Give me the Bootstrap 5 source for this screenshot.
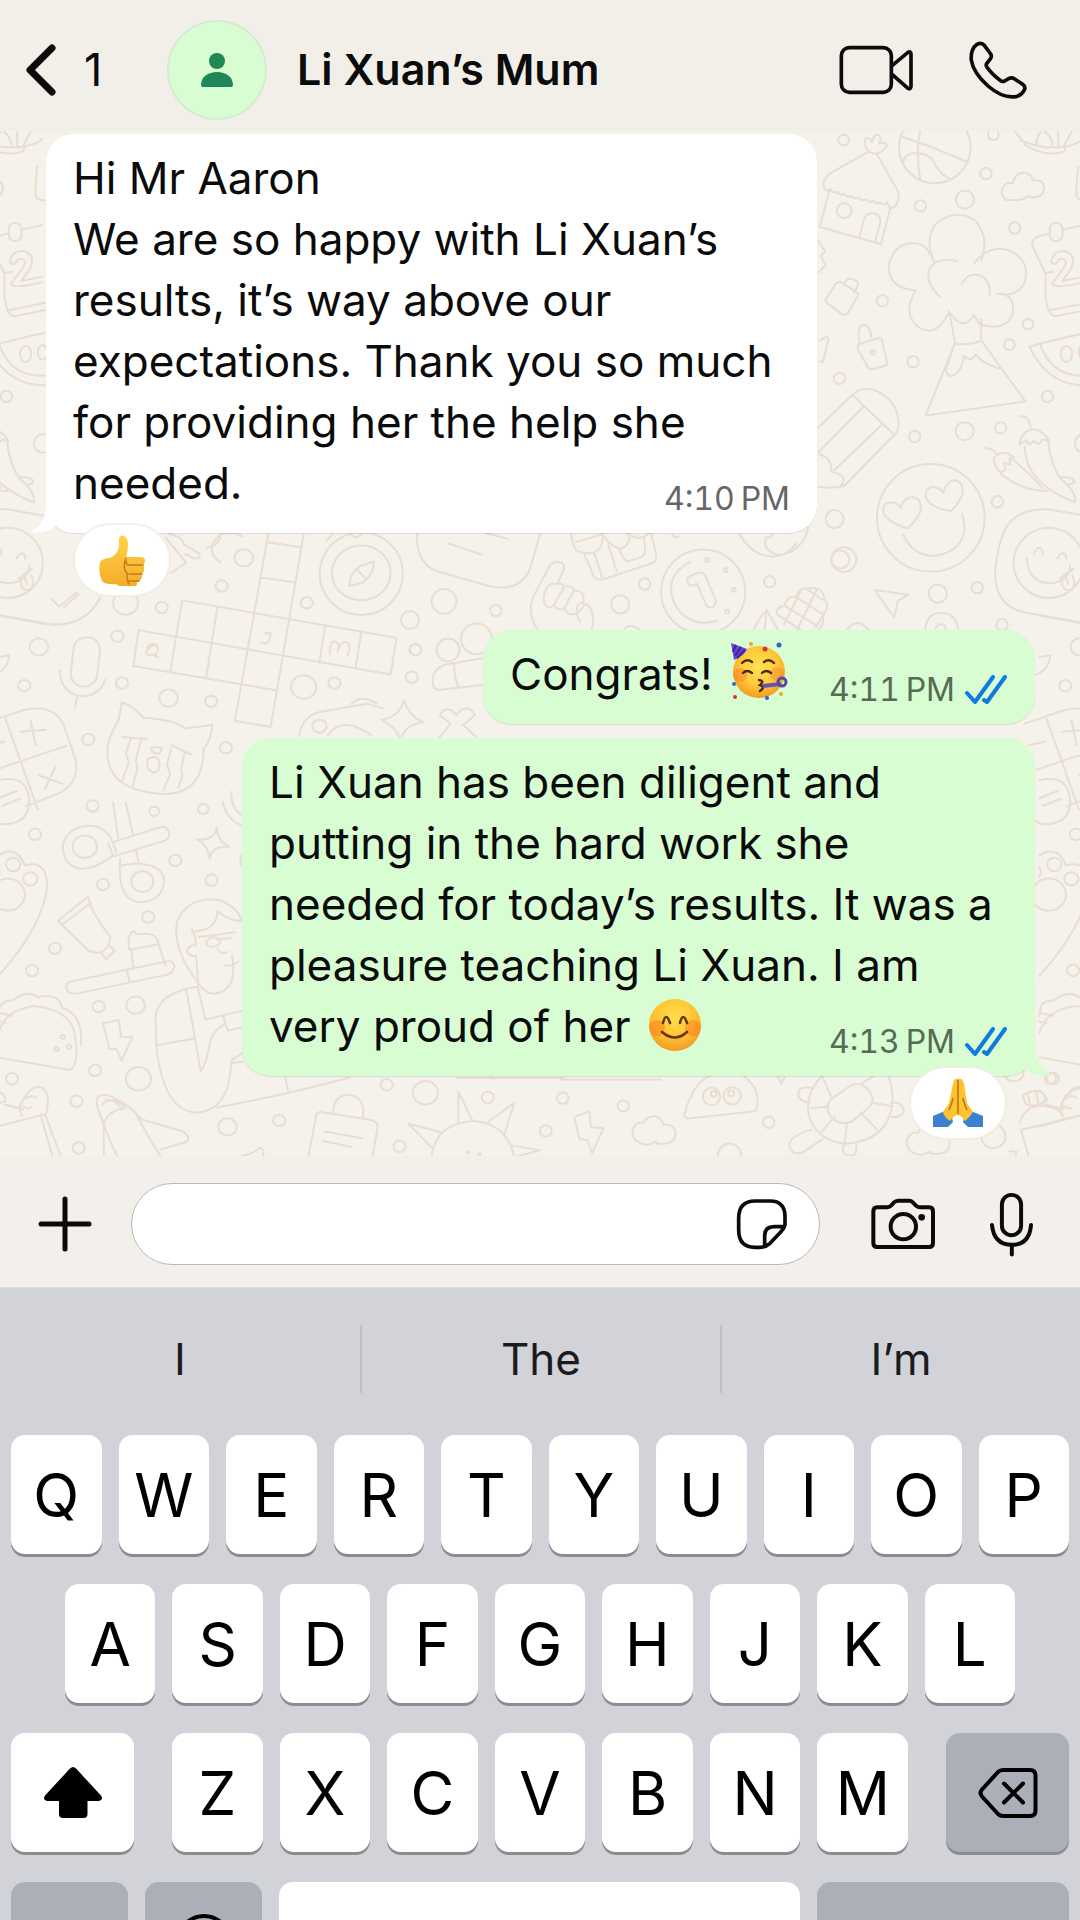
<!DOCTYPE html>
<html lang="en">
<head>
<meta charset="utf-8">
<meta name="viewport" content="width=device-width, initial-scale=1">
<title>Li Xuan’s Mum</title>
<link href="https://cdn.jsdelivr.net/npm/bootstrap@5.3.0/dist/css/bootstrap.min.css" rel="stylesheet">
<style>
  body { font-family: Inter, "Liberation Sans", sans-serif; color: #0b0b0b; background: #d1d3d9; }
  button, input { font-family: inherit; color: inherit; }
  svg { display: block; flex-shrink: 0; }
  .line-icon { fill: none; stroke: currentColor; stroke-linecap: round; stroke-linejoin: round; }
  .plain-btn { border: 0; padding: 0; background: none; }

  .topbar { background: #f2efe9; height: 131px; padding: 9px 52px 0 25px; }
  .back-link { width: 142px; gap: 27px; font-size: 45px; color: inherit; }
  .avatar { width: 100px; height: 100px; background: #d8fdd2; border: 2px solid #d3ecce; }
  .contact-name { font-size: 43px; font-weight: 600; margin-left: 30px; }
  .call-actions { gap: 53px; }

  .chat { background: #f5f2eb; padding: 3px 45px 80px 46px; }
  .wallpaper { position: absolute; inset: 0; width: 100%; height: 100%; }
  .wallpaper g { fill: none; stroke: #e9ddd2; stroke-width: 2px; stroke-linejoin: round; stroke-linecap: round; }
  .wallpaper g * { vector-effect: non-scaling-stroke; }
  .bubble { max-width: 100%; padding: 14px 27px 17px; border-radius: 28px; font-size: 44px; line-height: 61px; box-shadow: 0 1px 1px rgba(0,0,0,.1); }
  .bubble p { margin: 0; white-space: nowrap; }
  .bubble-in { width: 771px; background: #fff; margin-bottom: 97px; }
  .bubble-out { background: #d8fdd2; }
  .bubble-short { width: 552px; margin-bottom: 14px; }
  .bubble-long { width: 793px; }
  .stamp { font-size: 32px; line-height: 34px; margin-top: 29px; color: #666; gap: 10px; font-variant-numeric: tabular-nums; }
  .bubble-out .stamp { color: #566b54; }
  .ticks { color: #0f7be0; }
  .tail-in { position: absolute; left: -16px; bottom: -1px; }
  .tail-out { position: absolute; right: -16px; bottom: 0; }
  .face { display: inline-block; vertical-align: -10px; margin: -4px 0 0 5px; }
  .reaction { position: absolute; width: 94px; height: 70px; background: #fff; border-radius: 35px; box-shadow: 0 0 0 2px rgba(240,236,228,.8); }
  .reaction-start { left: 29px; bottom: -62px; }
  .reaction-end { right: 30px; bottom: -62px; }

  .composer { background: #f3f0eb; padding: 27px 46px 22px 38px; border-bottom: 1px solid #dcdbda; }
  .message-pill { height: 82px; min-width: 0; margin: 0 51px 0 39px; padding: 0 31px 0 32px; background: #fff; border: 1px solid #b9b9bb; border-radius: 41px; }
  .message-pill input { border: 0; outline: 0; background: none; font-size: 44px; min-width: 0; }
  .composer-end { gap: 54px; }

  .keyboard { background: #d1d3d9; min-height: 0; }
  .suggestions { padding: 37px 0 42px; }
  .suggestions button { height: 68px; font-size: 44px; color: #1b1b1e; }
  .suggestions button + button { border-left: 2px solid #bcbec4; }
  .key-rows { gap: 30px; padding: 0 11px; }
  .key-row { gap: 17px; }
  .key-row-home { padding: 0 54px; }
  .key { flex: 1 1 0; height: 119px; padding: 0; border: 0; border-radius: 14px; background: #fff; color: #000; font-size: 60px; line-height: 1; box-shadow: 0 3px 0 #8a8c91; }
  .key-wide { flex: 0 0 123px; }
  .key-grey { background: #abafb8; }
  .letter-block { gap: 17px; margin: 0 21px; }
  .key-small { flex: 0 0 117px; }
  .key-space { flex: 520 1 0; }
  .key-return { flex: 252 1 0; }
</style>
</head>
<body>
<div class="vh-100 overflow-hidden d-flex flex-column">

  <header class="topbar d-flex align-items-center flex-shrink-0">
    <a class="back-link d-flex align-items-center text-decoration-none" href="#" aria-label="Back, 1 unread">
      <svg class="line-icon" width="32" height="54" viewBox="0 0 32 54" stroke-width="7"><path d="M27 5 5 27l22 22"/></svg>
      <span>1</span>
    </a>
    <div class="avatar rounded-circle d-flex align-items-center justify-content-center">
      <svg width="32" height="36" viewBox="0 0 32 36" fill="#1e8755"><circle cx="16" cy="9" r="8"/><path d="M0 33c0-8 7-13 16-13s16 5 16 13q0 2-2 2H2q-2 0-2-2z"/></svg>
    </div>
    <h1 class="contact-name mb-0 text-nowrap">Li Xuan’s Mum</h1>
    <div class="call-actions d-flex align-items-center ms-auto">
      <button class="plain-btn" aria-label="Video call"><svg class="line-icon" width="76" height="52" viewBox="118 74 228 156" stroke-width="11"><rect x="125" y="85" width="150" height="134" rx="24"/><path d="m278 138 47-39q9-5 9 6v96q0 10-9 6l-47-41"/></svg></button>
      <button class="plain-btn" aria-label="Voice call"><svg class="line-icon" width="60" height="60" viewBox="500 62 180 180" stroke-width="11"><path d="M549 78q-9-10-22-3-20 15-17 48 6 38 50 77 44 38 84 32 18-4 26-22 3-9-6-15l-24-16q-9-6-18-1l-12 7q-6 3-12-1-28-21-42-42-3-5 0-9l12-16q4-6 0-13z"/></svg></button>
    </div>
  </header>

  <main class="chat position-relative overflow-hidden flex-shrink-0">
    <svg class="wallpaper" viewBox="0 131 1080 1022" preserveAspectRatio="xMidYMin slice" aria-hidden="true">
      <defs>
        <g id="doodles-east" transform="translate(780 120) scale(.33333)">
          <path d="M128 195q0-20 20-35l115-65 25 8 60 105q10 20 0 40-4 15-18 15-14-10-10-18-10 14-22 2-10 8-22-6-10 10-22-4-12 8-22-6-10 8-22-4-12 8-20-6-14 8-20-6-14 6-22-8-10 8-18-2zM145 212l-28 108 183 52 28-110M235 352l14-54q10-24 34-18 20 8 14 30l-16 58M262 95q-16-28-8-40 14-4 18 12 8-28 20-22 14 6 2 26 18-8 24 4-6 18-32 26"/><circle cx="190" cy="271" r="22"/>
          <circle cx="188" cy="60" r="16"/><circle cx="461" cy="82" r="107"/><path d="M362 50q90 28 194 75M436-20q-40 80-18 200M365 125q10-24 36-26 50 0 60 34 20 34 48 44M405 30h90"/>
          <circle cx="614" cy="160" r="17"/><circle cx="551" cy="238" r="27"/><circle cx="418" cy="257" r="17"/><circle cx="700" cy="323" r="17"/><circle cx="636" cy="44" r="16"/>
          <path d="M668 233q-16-22 6-42 14-6 20 0 8-34 34-34 24 4 26 24 32-6 34 24-4 28-32 26-12 2-16-4-8 14-46 12-20 4-26-6z"/>
          <path d="M700 36q30 30 30 38 60 40 118 20l6-14M765 76q2-36 14-40M790 36q20 10 24 44M830 36v40M870 36l-24 44q40-6 60-24M716 60q70 30 130 20"/>
          <path d="M458 422q-30-70 10-115 58-44 114-6 44 50 18 118M578 428q50-60 110-36 60 30 42 94-20 44-82 34 54-2 46 60-20 54-98 32l-18-28q-28 42-58 10l-16-20q-38 78-88 48-56-38-12-112-86-8-80-78 20-78 96-60 24 14 24 30M475 528q-50-50-26-90 26-28 76-16M542 490q18-36 58-24 32 18 24 60M504 572l18 98q44 4 78-10v-64M520 670l-86 214 298-42-132-182M520 670l-26 80q10 26 30 10 20-16 24-54 20 20 36-4 20 28 74 42"/>
          <path d="m135 535 30-44q8-10 16-6l46 30q8 6 2 16l-28 46q-8 10-18 4l-44-34q-6-4-4-12zM192 490q4-20 22-14 26 6 12 30l-8 12M232 672l60-20q8-2 10 4l16 68q2 8-6 12l-40 10q-8 0-12-8l-28-50q-4-12 0-16zM236 668q-10-44 8-54 22-4 28 36"/><circle cx="275" cy="695" r="6"/><circle cx="304" cy="541" r="17"/><circle cx="396" cy="723" r="17"/><circle cx="740" cy="611" r="16"/><circle cx="684" cy="672" r="16"/><circle cx="176" cy="773" r="17"/><circle cx="798" cy="827" r="17"/>
          <path d="M752 375q0-20 18-26l35-10M845 328l60-14M752 375l40 84v70q8 56 30 58l100-20M800 570l120-24M795 458l20-4M808 424q8-34 40-32 40 10 20 54l-26 36 60-12M808 424q6 10 18 4 4-16 20-12 12 6 4 22l-38 52q8 16 90-4"/><rect x="805" y="308" width="38" height="54" rx="17"/><path d="M890 140q-8 70-4 92 20 20 90-4"/>
          <path d="M744 678q70-20 190-46M744 678q60 130 196 114M776 672q40 110 160 90"/><ellipse cx="855" cy="700" rx="17" ry="24"/><ellipse cx="906" cy="695" rx="14" ry="22"/>
          <path d="m110 922 105-100q20-22 62-16 76 32 76 106-4 30-24 40L190 1095q-30 8-80 2M217 825l120 114M247 858 115 992M300 914 160 1048M115 1000q40 10 36 52 34 4 38 26l-8 16M112 362q10 10 12 20l10 10-14 16 14 26-20 22M115 660l24-12 4 6-16 70-12-2"/>
          <circle cx="401" cy="947" r="17"/><circle cx="550" cy="931" r="27"/><circle cx="658" cy="921" r="17"/><circle cx="648" cy="1142" r="17"/><circle cx="908" cy="968" r="28"/>
          <path d="M714 887q26-4 32 24l4 16M714 972q6-40 36-46 30-4 54 34l-20-4-12 14-16-10-12 12-10-14zM730 976q0 110 150 168 6-30-44-72-32-50-36-116M608 982q30-2 40 20M638 1010q16-18 40-14l20 14-14 2 4 18-20-4 4 18-12 12q-26-22-22-46zM660 1060q60 50 140 50M692 1014q50 40 90 86M840 1068q40 0 38 18l-20 6"/>
          <circle cx="449" cy="1190" r="161"/><path d="M380 1222q-66-20-73-50-4-28 24-28 20 0 28 16 8-32 36-32 26 4 24 38-4 22-39 56zM510 1170q-66-10-76-42-4-26 20-30 20 0 32 18 8-36 34-38 28 4 24 40-4 18-34 52zM366 1240q30 64 90 64 90-10 94-86-2-26-8-40"/>
          <circle cx="161" cy="1194" r="27"/><circle cx="189" cy="1315" r="37"/><circle cx="588" cy="1399" r="17"/><circle cx="470" cy="1417" r="27"/><path d="m281 1406 102 14-32 18-12 50z"/>
          <path d="M945 1190l-140-25q-90-6-128 50-26 40-36 140 0 100 90 118l214 38"/><circle cx="802" cy="1325" r="105"/><path d="M757 1300q8-22 18-20 10 4 8 20M828 1312q8-18 18-16 10 4 8 18M736 1312q4 72 72 74 56-6 58-54M835 1372l40-30M840 1376q0 30 22 32 26-10 10-46M852 1366l8 22"/><circle cx="662" cy="1510" r="17"/>
          <path d="M432 1528q2-52 48-54 46 2 52 54M462 1526q4-18 18-18 12 2 14 18M196 1528q34-46 68 0"/>
        </g>
        <g id="doodles-middle" transform="translate(400 520) scale(.33333)">
          <path d="M52 36q-4 90 60 114l155 44q98 22 126-60l28-98M145 66l100 34M258 36l66 17"/>
          <circle cx="133" cy="240" r="37"/><circle cx="31" cy="296" r="27"/><circle cx="288" cy="267" r="17"/><circle cx="660" cy="249" r="27"/><circle cx="733" cy="188" r="17"/><circle cx="1107" cy="181" r="17"/><circle cx="1318" cy="115" r="27"/><circle cx="230" cy="352" r="46"/><circle cx="145" cy="385" r="34"/><circle cx="48" cy="384" r="17"/>
          <path d="M450 132q14-16 36-6 10 8 2 26l-16 36q-26-6-34 16-14 32 0 50 14 10 24-4 8 20 30 10 10 22 30 18 22-6 30-30 20 0 26 38 4 26-12 60M450 132l-48 90q-24 50 12 104M472 188q18-4 20 10-16 24-30 52M500 194q20 0 22 14-20 28-30 58M524 208q30-2 26 36-20 0-20 20-2 20 10 36"/>
          <path d="M512 26q4 50 20 64 44 16 66-8 10-10 12-60M528 62l76-22M604 36q40 60 70 40 14-10 14-40M672 30q50 40 78 0M552 98l28 66q10 14 30 10l150-50q8-8 8-24l-16-64M582 94l24 74M625 74l25 76M655 82l16 30q6 10 20 6l38-14q10-10 2-50"/>
          <circle cx="908" cy="211" r="126"/><path d="M870 122q-80 40-50 120 40 80 130 56M862 182q-6-16 10-18 30-20 42-2l32 76q0 18-16 20-12 0-16-14l-24-56q-26 12-28-6z"/><circle cx="921" cy="116" r="6"/><circle cx="975" cy="146" r="6"/><circle cx="999" cy="205" r="6"/><circle cx="980" cy="270" r="6"/>
          <path d="M1015 36q40 70 102 70 90-10 105-86M1090 26q24-10 26 12-4 14-20 10-14 40 40 54 26-4 50-34"/>
          <path d="M1058 326q20-40 40-60l34 60M1092 326l6-60M1128 276q0-20 24-22 4-30 34-28 10-30 36-24 44-10 48 30 20 26-4 46 6 30-12 44M1130 278l70 48M1154 254l90 56M1188 228l82 54M1220 204l46 32M1188 328l60-124M1150 308l50-100M1244 318l26-40"/>
          <path d="M816 40q4 10 20 6M670 326q20-24 48 0"/>
        </g>
        <g id="doodles-west" transform="translate(0 500) scale(.35714 .33333)">
          <path d="M466 108l58 76-44 32M476 98q40 10 40 30l46 30q4 14-16 14l-24-14M580 140q40-10 40-40M620 184q-50-40 0-84 40-12 60 6"/>
          <circle cx="685" cy="170" r="26"/><circle cx="623" cy="254" r="17"/><circle cx="861" cy="304" r="17"/><circle cx="355" cy="305" r="35"/><circle cx="456" cy="318" r="17"/><circle cx="332" cy="404" r="17"/><circle cx="113" cy="436" r="26"/><circle cx="72" cy="552" r="17"/><circle cx="345" cy="544" r="17"/><circle cx="475" cy="589" r="26"/><circle cx="594" cy="599" r="17"/><circle cx="852" cy="556" r="35"/><circle cx="938" cy="544" r="17"/><circle cx="1164" cy="445" r="17"/><circle cx="1154" cy="527" r="17"/><circle cx="251" cy="713" r="17"/><circle cx="635" cy="738" r="17"/><circle cx="896" cy="673" r="20"/>
          <path d="M755 90 660 657l100 19L852 100M752 123l94 15M736 229l90 14M513 297l598 112-16 110-704-133-14 107 400 73M513 297l-33 212M611 320l-31 207M912 373l-16 110M1013 392l-16 108"/>
          <path d="M415 438q16-18 28-6 8 28-16 30-20 0-12-16 10-16 28-14M436 462l10 6M744 396l16-2-4 24q-8 12-22 6M925 458q0-40 16-38 14 4 6 30 10-34 24-28 16 4 4 40" />
          <circle cx="1013" cy="215" r="82"/><ellipse cx="1013" cy="217" rx="116" ry="124"/><path d="M980 255q0-40 28-60l40-14q0 40-30 62zM1000 204l26 28M916 118l16-20M980 96q20 24 36 0"/>
          <rect x="206" y="407" width="74" height="148" rx="37" transform="rotate(6 243 480)"/><path d="M172 506q0 68 60 78 50 0 66-50M220 585l-6 34M148 292l22 24 50-44M182 318l42-40M0 342l120 24q120 20 165-80"/>
          <path d="M-40 665l110-40q90-20 114 50l32 100q10 72-50 100l-90 38M20 652l90 270M-10 804l200-72M62 690l70-6M90 658l14 74M112 820l68 26M160 792l-30 70M-30 730l46-10"/><path d="M0 835q80-20 86 60 0 70-70 72-20 0-36-20M0 888l50-20M10 912l50-22M0 466l30-4q-4 50-50 60"/>
          <path d="M345 602q30 10 60 46 90 6 114 32l78-10q-4 50-24 70 0 140-116 136-144-10-152-110-6-50 30-110zM345 706l70 6M370 712l-14 40 8 30-20 60M398 714l-14 60 4 30-14 50M482 730l56 28M482 740l-12 50 10 26-20 50M520 752l-10 50 4 20-12 36M425 740q14-8 32 0-4 16-16 16-12-4-16-16zM432 765q20 0 18 30-6 20-20 16-22-12-12-40zM840 702q8-60 60-72l130-24 44 14M986 606q30-30 70 0M1070 655q50-10 62-60 14 50 54 66-50 10-60 44M1070 655q40 20 48 50M920 700q40-60 120 0M1232 640q20-34 46 0 34-40 52 0l-32 30 34 34M1232 640l30 26-30 40"/>
          <path d="M1212 540q0-50 60-56l80-14M1212 540q0 26 20 24l120-14M1272 484q0 50 14 74"/>
        </g>
        <g id="doodles-south" transform="translate(0 800) scale(.35714 .33333)">
          <path d="M320 0l14 108M355 0l20 96M320 120l135-46q22 0 22 24 0 14-20 20L324 162M306 122l14 38M340 170q-10 130 60 130 64-8 62-70-6-44-80-46l-38 6M384 146l8 38M318 162q-50 40-90 38-50-10-48-74 20-60 86-54 50 10 62 80"/><circle cx="241" cy="134" r="34"/><circle cx="402" cy="238" r="31"/>
          <circle cx="102" cy="97" r="17"/><circle cx="263" cy="12" r="17"/><circle cx="435" cy="28" r="14"/><circle cx="572" cy="21" r="15"/><circle cx="494" cy="175" r="17"/><circle cx="292" cy="247" r="17"/><circle cx="595" cy="234" r="17"/><circle cx="418" cy="344" r="17"/><circle cx="158" cy="438" r="17"/><circle cx="94" cy="504" r="17"/><circle cx="280" cy="612" r="17"/><circle cx="383" cy="608" r="26"/><circle cx="270" cy="803" r="17"/><circle cx="391" cy="828" r="35"/><circle cx="38" cy="828" r="17"/><circle cx="218" cy="895" r="17"/><circle cx="640" cy="972" r="26"/><circle cx="784" cy="953" r="17"/><circle cx="224" cy="1035" r="17"/><circle cx="1084" cy="846" r="17"/><circle cx="1192" cy="870" r="35"/><circle cx="1366" cy="884" r="17"/><circle cx="1120" cy="1030" r="17"/><circle cx="1528" cy="984" r="17"/>
          <path d="M610 76q0 40 34 58-50-4-54 36-6-44-36-58 50 4 56-36zM626 0q10 50 52 70M650-30q0 50 30 70M676 160v30"/>
          <circle cx="26" cy="277" r="48"/><circle cx="41" cy="187" r="20"/><circle cx="89" cy="230" r="20"/><path d="M0 160q50-34 74 30 60-20 62 60-10 120-136 270M0 195q6 16 0 28"/>
          <path d="M250 283q10 50 62 120 0 34-26 46-20 6-36-6L166 356zM258 302l-82 66M286 449l14 22 24-26-16-18M370 392q10-10 16 4 60-10 60 30l-80 16q-8-30 4-50zM372 442l4 54M448 428l18 60M205 536l270-60q18 0 16 20-6 20-26 22l-250 56q-26 0-26-22 0-12 16-16zM358 502l8 34"/>
          <path d="M556 540q-70-100-58-180 30-80 120-66 50 20 60 60M540 378q10 20 12 50-20 0-26 16 6 20 26 16l6 84q30 40 60 26 50-20 34-110M540 390l20-4q50-10 52-60 30 30 70 30M560 404l100-14M580 420q10-20 30-14 20 14-4 26-24 4-26-12zM610 412l40-6M612 440q10 20 26 8M630 488q20 6 40-10"/>
          <path d="M555 553q-120 20-116 100l2 80q20 200 120 196 60-10 80-80l12-80M525 565l40 240q16-20 24-80 8-40 40-60M556 553l22 98 100-26M440 728l104-20M628 642l12 42 40-10M655 770l28-20M610 914q200-40 370-90M800 815l8 48M655 780l28-4"/>
          <path d="M0 640q0-50 40-46 40-34 70-10 60-14 68 32M0 690q20-70 100-80 90 10 110 70 20 100-10 122l-200-38M178 616q60 20 52 110M0 630l38 10M0 658l20 4M292 662l44-10 6 50 32 2-30 70-14-34-20-2z"/><circle cx="180" cy="702" r="6"/><circle cx="197" cy="732" r="6"/><circle cx="162" cy="740" r="6"/>
          <path d="M66 940q-14-26 4-50 20-44 50-36 20 10 18 50l-4 26M78 885q20-10 26 0M70 910q10 10 20 4M0 970l130-36 44 126M120 944l32 120M0 865q20 10 20 30l-20 8M18 905l50 14M294 1060V960q-30-60-14-80 20-10 50 10 40 20 70 60l112 34q30 20 10 34l-70 22M275 910q40 120 58 150M385 935q40 80 68 125M290 905q30-30 64 10-50 10-58 46M300 890q30 0 44 30"/>
          <path d="M865 1060l22-120q0-14 16-12l130 22q26 4 26 20l-14 90M935 930q0-50 40-54 40 4 44 44l-2 26M912 986l104 20M906 1014l80 18M680 1058q30-4 50-24 16 6 8 24"/>
          <path d="M1210 1060q10-100 120-106 90 10 110 106M1284 958v-92l38 84M1368 956l72-56-26 90M1210 1034l-66-72 90 26M1436 1028l74 14-66 20M1280 826h300M1372 820l8 8"/><circle cx="1310" cy="1048" r="3"/><circle cx="1344" cy="1054" r="3"/>
        </g>
        <g id="doodles-southeast" transform="translate(560 960) scale(.33333)">
          <path d="M0 350h302M372 455q30-110 90-120h80q60 40 46 100l-4 10-200 22q-12 0-12-12z"/><circle cx="453" cy="401" r="26"/><circle cx="515" cy="399" r="26"/><circle cx="460" cy="393" r="9"/><circle cx="512" cy="391" r="9"/><circle cx="189" cy="429" r="17"/><circle cx="624" cy="478" r="17"/><circle cx="8" cy="406" r="17"/>
          <path d="M42 462l46-16 4 46 38 4-34 74-14-38-24-4zM226 532q-20-24 2-48 10-8 22-4 8-22 36-20 22 10 22 26 36-4 38 26-4 32-38 30-16 4-22-6-30 20-60-4zM470 580q10-40 40-38 30 4 32 38M1046 562q-20-24 2-48 10-8 22-4 8-22 36-20 22 10 22 26 36-4 38 26-4 32-38 30-16 4-22-6-30 20-60-4z"/>
          <path d="M785 338q-60 60-38 130 30 70 110 74 130-10 138-130 0-40-14-74M812 408l52-36q14-10 30-8 34 10 42 44-4 20-14 28l-50 40q-20 8-40 2-30-16-32-40 0-20 12-30zM810 400l-24-56M804 430l-54 6M822 462l-40 44M858 480l-6 60M900 450l48 50M934 420l60 10M900 364l40-26M756 376q-50-10-42 26 14 20 36 16M752 500q-70 20-66 50 10 30 40 18l60-40M850 545q-14 30 20 34 20-2 16-40M990 420q30-6 38 20-4 30-40 20M650 340l12 24 12-26"/>
          <circle cx="1467" cy="347" r="17"/><circle cx="1357" cy="326" r="30"/><circle cx="1296" cy="520" r="36"/><path d="M1384 400q20-20 54-14 16 10 12 30-20 16-56 10zM1400 394l6 32M1424 388l6 34M1376 478q14-50 70-50 50 10 56 26M1402 580l-24-80M1384 500l176-44M1500 454q-10-60 60-80M1510 400q10-10 20 0M1506 430l20 8M1345 565l22 2-6 14"/>
        </g>
      </defs>
      <use href="#doodles-east"/><use href="#doodles-east" x="-1038"/>
      <use href="#doodles-middle"/>
      <use href="#doodles-west"/><use href="#doodles-west" x="1038"/>
      <use href="#doodles-south"/><use href="#doodles-south" x="1038"/>
      <use href="#doodles-southeast"/>
    </svg>

    <div class="position-relative d-flex flex-column align-items-end">
      <article class="bubble bubble-in position-relative align-self-start">
        <svg class="tail-in" width="44" height="26" viewBox="0 0 44 26" fill="#fff"><path d="M16 0c-1 10-5 18-16 24 8 2 18 0 26-6 6 5 12 7 18 7V0z"/></svg>
        <p class="position-relative">Hi Mr Aaron<br>We are so happy with Li Xuan’s<br>results, it’s way above our<br>expectations. Thank you so much<br>for providing her the help she<br>needed.<time class="stamp float-end">4:10&#8201;PM</time></p>
        <span class="reaction reaction-start d-flex align-items-center justify-content-center" role="img" aria-label="Thumbs up">
          <svg width="48" height="52" viewBox="0 0 48 52"><defs><linearGradient id="thumbFill" x1="0" y1="0" x2="0" y2="1"><stop offset="0" stop-color="#ffd34b"/><stop offset="1" stop-color="#f4ad28"/></linearGradient></defs><path d="M2 28q3-4 10-4 8-4 9-12V5q1-5 5-3 4 2 4 9 0 6-2 12h15q4 0 4 4 0 3-2 4 2 2 1 5 0 3-3 4 2 2 0 5-1 3-4 3 1 5-5 5H27q-5 0-9-3-10 1-14-3-4-8-2-19z" fill="url(#thumbFill)"/><path d="M45 31H31q-3 0-3-4M44 40H31M41 47H30M28 24q-4 10 1 15 0 8 2 11" fill="none" stroke="#c87918" stroke-width="1.5" stroke-linecap="round"/></svg>
        </span>
      </article>

      <article class="bubble bubble-out bubble-short">
        <p>Congrats! <svg class="face" role="img" aria-label="Partying face" width="58" height="58" viewBox="0 0 58 58"><defs><radialGradient id="partyFill" cx=".5" cy=".4" r=".6"><stop offset="0" stop-color="#ffe251"/><stop offset=".6" stop-color="#ffc93a"/><stop offset="1" stop-color="#f39a22"/></radialGradient></defs><circle cx="29" cy="30" r="26" fill="url(#partyFill)"/><circle cx="10" cy="33" r="7" fill="#f77b2c" opacity=".45"/><circle cx="47" cy="32" r="7" fill="#f77b2c" opacity=".4"/><path d="M1 1l16 6q-3 7-13 11z" fill="#6d42d8"/><path d="M6 3l-3 7M11 5l-6 9M15 8l-8 8" stroke="#3a2795" stroke-width="2"/><g fill="none" stroke="#4b2c12" stroke-width="2.4" stroke-linecap="round"><path d="M12 21q5-5 10-1M34 20q5-4 10 1M13 31q4-4 9 0M32 31q4-4 9 0M29 38q6 1 1 5 6 2 0 6"/></g><path d="M33 44l18-2" stroke="#6552b5" stroke-width="4"/><circle cx="52" cy="40" r="4" fill="none" stroke="#514aa6" stroke-width="3"/><g fill="#2e66c4"><circle cx="49" cy="3" r="2.5"/><circle cx="4" cy="42" r="2"/><circle cx="37" cy="56" r="2"/></g><g fill="#d9363b"><circle cx="35" cy="7" r="2.5"/><circle cx="5" cy="55" r="2"/></g><g fill="#f2a52b"><circle cx="21" cy="2" r="2"/><circle cx="51" cy="52" r="2"/></g></svg><time class="stamp float-end d-flex align-items-center">4:11&#8201;PM<svg class="line-icon ticks" role="img" aria-label="Read" width="43" height="30" viewBox="0 0 43 30" stroke-width="4"><path d="m2 18 8 9L28 2M19 25l3 2L40 2"/></svg></time></p>
      </article>

      <article class="bubble bubble-out bubble-long position-relative">
        <svg class="tail-out" width="44" height="44" viewBox="0 0 44 44" fill="#d8fdd2"><path d="M0 0h28c-1 22 2 34 16 43-10 2-20-1-28-7-6 5-12 7-16 7z"/></svg>
        <p class="position-relative">Li Xuan has been diligent and<br>putting in the hard work she<br>needed for today’s results. It was a<br>pleasure teaching Li Xuan. I am<br>very proud of her <svg class="face" role="img" aria-label="Smiling face" width="54" height="54" viewBox="0 0 54 54"><defs><radialGradient id="smileFill" cx=".5" cy=".35" r=".65"><stop offset="0" stop-color="#ffe04a"/><stop offset=".6" stop-color="#ffc334"/><stop offset="1" stop-color="#f39a22"/></radialGradient></defs><circle cx="27" cy="27" r="26" fill="url(#smileFill)"/><circle cx="9" cy="30" r="8" fill="#fb7a1e" opacity=".5"/><circle cx="45" cy="30" r="8" fill="#fb7a1e" opacity=".5"/><path d="M15 25q3-12 7 0M32 25q3-12 7 0M14 34q13 11 25 0" fill="none" stroke="#66380f" stroke-width="2.6" stroke-linecap="round"/></svg><time class="stamp float-end d-flex align-items-center">4:13&#8201;PM<svg class="line-icon ticks" role="img" aria-label="Read" width="43" height="30" viewBox="0 0 43 30" stroke-width="4"><path d="m2 18 8 9L28 2M19 25l3 2L40 2"/></svg></time></p>
        <span class="reaction reaction-end d-flex align-items-center justify-content-center" role="img" aria-label="Folded hands">
          <svg width="50" height="50" viewBox="0 0 50 50"><path d="M0 38l12-5q8 6 8 11l-5 5H0zM50 38l-12-5q-8 6-8 11l5 5h15z" fill="#3d80cf"/><path d="M25 1q5-1 6 5l3 19 6 9q-3 5-8 9-4-6-7-6-4 0-8 6-6-4-7-9l6-9 4-19q1-6 5-5z" fill="#ffc32f"/><path d="M25 2v34M20 20q-2 8-4 12M30 20q2 8 4 12" stroke="#b77416" stroke-width="1.5" fill="none"/></svg>
        </span>
      </article>
    </div>
  </main>

  <form class="composer d-flex align-items-center flex-shrink-0">
    <button type="button" class="plain-btn" aria-label="Attach"><svg class="line-icon" width="54" height="56" viewBox="0 0 54 56" stroke-width="5"><path d="M27 3v50M3 28h48"/></svg></button>
    <div class="message-pill d-flex align-items-center flex-grow-1">
      <input class="w-100" type="text" aria-label="Message">
      <button type="button" class="plain-btn" aria-label="Stickers"><svg class="line-icon" width="52" height="52" viewBox="108 74 156 156" stroke-width="11"><path d="M165 83h45q45 0 45 47v24q-2 12-12 21l-33 35q-13 12-30 12h-15q-49 0-49-52v-35q0-52 49-52zM194 216v-30q1-26 28-26h30"/></svg></button>
    </div>
    <div class="composer-end d-flex align-items-center flex-shrink-0">
      <button type="button" class="plain-btn" aria-label="Camera"><svg class="line-icon" width="64" height="54" viewBox="513 68 192 160" stroke-width="12"><path d="M520 205v-95q0-12 12-12h28q10 0 16-8l5-6q6-6 14-6h32q8 0 12 6l6 6q6 8 16 8h26q12 0 12 12v95q0 12-12 12H532q-12 0-12-12z"/><circle cx="610" cy="156" r="38"/><circle cx="665" cy="128" r="10" fill="currentColor" stroke="none"/></svg></button>
      <button type="button" class="plain-btn" aria-label="Record voice message"><svg class="line-icon" width="45" height="66" viewBox="864 48 136 196" stroke-width="12"><rect x="903" y="58" width="58" height="122" rx="29"/><path d="M873 149q6 60 60 60 53 0 58-60M933 210v28"/></svg></button>
    </div>
  </form>

  <section class="keyboard flex-grow-1 overflow-hidden" aria-label="Keyboard">
    <div class="suggestions d-flex">
      <button class="plain-btn col-4">I</button>
      <button class="plain-btn col-4">The</button>
      <button class="plain-btn col-4">I’m</button>
    </div>
    <div class="key-rows d-flex flex-column">
      <div class="key-row d-flex">
        <button class="key">Q</button><button class="key">W</button><button class="key">E</button><button class="key">R</button><button class="key">T</button><button class="key">Y</button><button class="key">U</button><button class="key">I</button><button class="key">O</button><button class="key">P</button>
      </div>
      <div class="key-row key-row-home d-flex">
        <button class="key">A</button><button class="key">S</button><button class="key">D</button><button class="key">F</button><button class="key">G</button><button class="key">H</button><button class="key">J</button><button class="key">K</button><button class="key">L</button>
      </div>
      <div class="key-row d-flex">
        <button class="key key-wide d-flex align-items-center justify-content-center" aria-label="Shift"><svg width="58" height="52" viewBox="0 0 58 52"><path d="M26 1.5q3-3 6 0l25 27q3 5-3 5.500H43.500V47q0 4-4 4H19q-4 0-4-4V34H4q-6-.5-3-5.500z"/></svg></button>
        <div class="letter-block d-flex flex-grow-1">
          <button class="key">Z</button><button class="key">X</button><button class="key">C</button><button class="key">V</button><button class="key">B</button><button class="key">N</button><button class="key">M</button>
        </div>
        <button class="key key-wide key-grey d-flex align-items-center justify-content-center" aria-label="Delete"><svg class="line-icon" width="60" height="52" viewBox="0 0 60 51" stroke-width="4"><path d="M25 2.500h27q5.500 0 5.500 5.500v35q0 5.500-5.500 5.500H25q-3 0-5-2L4 29q-3-3.500 0-7L20 4.500q2-2 5-2zM26 16l19 19M45 16 26 35"/></svg></button>
      </div>
      <div class="key-row d-flex">
        <button class="key key-small key-grey" aria-label="Numbers"></button>
        <button class="key key-small key-grey d-flex align-items-center justify-content-center" aria-label="Emoji"><svg class="line-icon" width="56" height="56" viewBox="0 0 56 56" stroke-width="4"><circle cx="28" cy="28" r="26"/></svg></button>
        <button class="key key-space" aria-label="Space"></button>
        <button class="key key-return key-grey" aria-label="Return"></button>
      </div>
    </div>
  </section>
</div>
<script src="https://cdn.jsdelivr.net/npm/bootstrap@5.3.0/dist/js/bootstrap.bundle.min.js"></script>
</body>
</html>
